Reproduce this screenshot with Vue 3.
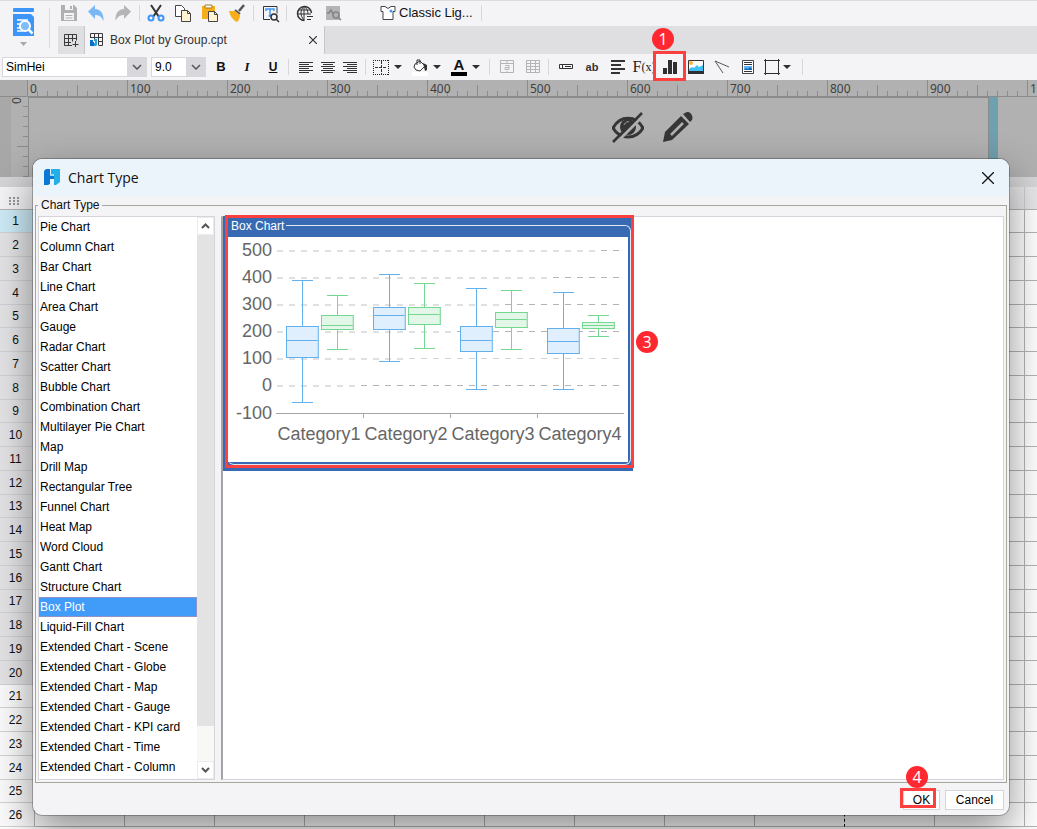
<script setup>
import { ref } from 'vue'

const chartTypes = [
  'Pie Chart', 'Column Chart', 'Bar Chart', 'Line Chart', 'Area Chart', 'Gauge', 'Radar Chart',
  'Scatter Chart', 'Bubble Chart', 'Combination Chart', 'Multilayer Pie Chart', 'Map', 'Drill Map',
  'Rectangular Tree', 'Funnel Chart', 'Heat Map', 'Word Cloud', 'Gantt Chart', 'Structure Chart',
  'Box Plot', 'Liquid-Fill Chart', 'Extended Chart - Scene', 'Extended Chart - Globe',
  'Extended Chart - Map', 'Extended Chart - Gauge', 'Extended Chart - KPI card',
  'Extended Chart - Time', 'Extended Chart - Column',
]
const selected = ref('Box Plot')
const font = ref('SimHei')
const size = ref('9.0')

const rows = Array.from({ length: 26 }, (_, i) => i + 1)
const rulerMarks = Array.from({ length: 11 }, (_, i) => i * 100)
const minorTicks = [10, 20, 30, 40, 60, 70, 80, 90]

// Value axis: y position, and the x where the thick dashes turn into thin ones
const gridLines = [
  { label: '500', y: 14, split: 372, thin: '#b4b4b4' },
  { label: '400', y: 41, split: 324, thin: '#b4b4b4' },
  { label: '300', y: 68, split: 276, thin: '#b4b4b4' },
  { label: '200', y: 95, split: 228, thin: '#b4b4b4' },
  { label: '100', y: 122, split: 180, thin: '#d4d4d4' },
  { label: '0', y: 149, split: 132, thin: '#b4b4b4' },
]
const blue = { line: '#62b1ec', fill: '#dfeffd', soft: '#a4d2f5' }
const green = { line: '#74d890', fill: '#e3f7e8', soft: '#a9e5b9' }
const boxes = [
  { c: blue, x: 58, top: 89, bottom: 120, median: 103, hi: 43, lo: 165 },
  { c: green, x: 93, top: 78, bottom: 92, median: 88, hi: 58, lo: 112 },
  { c: blue, x: 145, top: 70, bottom: 92, median: 78, hi: 37, lo: 124 },
  { c: green, x: 180, top: 70, bottom: 87, median: 77, hi: 46, lo: 111 },
  { c: blue, x: 232, top: 89, bottom: 114, median: 103, hi: 51, lo: 152 },
  { c: green, x: 267, top: 75, bottom: 90, median: 82, hi: 53, lo: 112 },
  { c: blue, x: 319, top: 91, bottom: 116, median: 104, hi: 55, lo: 152 },
  { c: green, x: 354, top: 85, bottom: 91, median: 88, hi: 78, lo: 99 },
]
const categories = ['Category1', 'Category2', 'Category3', 'Category4']
</script>

<template>
  <div class="page">
    <header class="top">
      <button class="brand" aria-label="Preview">
        <svg width="24" height="40" viewBox="0 0 24 40">
          <rect x="2" y="0" width="21" height="4" rx="1" fill="#3d96f7" />
          <path d="M2 6h18l3 3v19H2z" fill="#3d96f7" />
          <path d="M6 12h11M6 16h4M6 20h4M6 23h6" stroke="#fff" stroke-width="1.500" />
          <circle cx="14" cy="18" r="5" fill="#7fbcfa" stroke="#fff" stroke-width="2" />
          <path d="m17.500 21.500 4 4" stroke="#fff" stroke-width="2.500" />
          <path d="M9 34h7l-3.500 4z" fill="#a8a8aa" />
        </svg>
      </button>
      <div class="top-main">
        <div class="bar main-bar">
          <button class="ic" aria-label="Save"><svg viewBox="0 0 22 22" width="22" height="22"><path d="M3 3h13l3 3v13H3z" fill="#b0b0b2" /><path d="M7 3h8v5H7z" fill="#f4f4f6" /><path d="M12 4h2v3h-2z" fill="#b0b0b2" /><path d="M6 11h10v7H6z" fill="#f4f4f6" /><path d="M7.500 13.500h7M7.500 16h7" stroke="#b0b0b2" /></svg></button>
          <button class="ic" aria-label="Undo"><svg viewBox="0 0 22 22" width="22" height="22"><path d="M3 9.500 10 3v4c6 0 9 5 8.500 12-2-4-4-6-8.500-6v4z" fill="#7ab8f5" /></svg></button>
          <button class="ic" aria-label="Redo"><svg viewBox="0 0 22 22" width="22" height="22"><path d="M19 9.500 12 3v4c-6 0-9 5-8.500 12 2-4 4-6 8.500-6v4z" fill="#b5b5b7" /></svg></button>
          <i class="sep"></i>
          <button class="ic" aria-label="Cut"><svg viewBox="0 0 22 22" width="22" height="22" fill="none"><path d="m6 3 8 12M16 3 8 15" stroke="#333" stroke-width="2" /><circle cx="6" cy="16" r="2.500" stroke="#3d96f7" stroke-width="2" /><circle cx="16" cy="16" r="2.500" stroke="#3d96f7" stroke-width="2" /></svg></button>
          <button class="ic" aria-label="Copy"><svg viewBox="0 0 22 22" width="22" height="22" stroke="#444"><path d="M3.500 3.500h6l3 3v8h-9z" fill="#fff" /><path d="M9.500 8.500h6l3 3v8h-9z" fill="#fff3d2" /><path d="M15.500 8.500v3h3" fill="none" /></svg></button>
          <button class="ic" aria-label="Paste"><svg viewBox="0 0 22 22" width="22" height="22"><path d="M3 4h13v13H3z" fill="#f6ae1c" /><path d="M6 3h7v3H6z" fill="#fff" stroke="#a77a20" /><path d="M9.500 9.500h6l3 3v7h-9z" fill="#fff3d2" stroke="#444" /><path d="M15.500 9.500v3h3" fill="none" stroke="#444" /></svg></button>
          <button class="ic" aria-label="Format painter"><svg viewBox="0 0 22 22" width="22" height="22"><path d="m18 3-5 6" stroke="#555" stroke-width="2.500" /><path d="m9 8 5 4" stroke="#555" stroke-width="2" /><path d="M3 9h6l5 4c0 3-1 5-3 7-4-2-7-6-8-11z" fill="#f6ae1c" /></svg></button>
          <i class="sep"></i>
          <button class="ic" aria-label="Find and replace"><svg viewBox="0 0 22 22" width="22" height="22" fill="none"><path d="M11 17.500H4.500v-13h13.500v7" stroke="#333" /><path d="M7 9V7h8v2M11 7v7M9.500 14h3" stroke="#3d96f7" stroke-width="1.500" /><circle cx="15" cy="15" r="3" stroke="#333" stroke-width="1.500" /><path d="m17 17 3 3" stroke="#333" stroke-width="1.500" /></svg></button>
          <i class="sep"></i>
          <button class="ic globe" aria-label="Language"><svg viewBox="0 0 22 22" width="22" height="22" fill="none" stroke="#333"><path d="M18.500 11a7 7 0 1 0-7 7.500" stroke-width="1.500" /><path d="M11 4c-4 4-4 10 0 14M11 4c3 3 4 5 4 8M5 8h12M4 12h14M11 4v14M14 14.500h6M14 17.500h4" /></svg></button>
          <button class="ic" aria-label="Inspect"><svg viewBox="0 0 22 22" width="22" height="22" fill="none"><path d="M4 4h14v14H4z" fill="#b4b4b6" /><path d="M5 11h2l2-3 2 4 1-2" stroke="#858587" stroke-width="1.500" /><circle cx="14" cy="13" r="3" stroke="#858587" stroke-width="1.500" /><path d="m16 15 3 3" stroke="#858587" stroke-width="1.500" /></svg></button>
          <button class="theme"><svg width="18" height="16" viewBox="0 0 18 16"><path d="M2 1.500h4l3 2 3-2h4v5h-2v8H4v-8H2z" fill="#fff" stroke="#444" /><circle cx="12" cy="6" r="1.500" fill="#3d96f7" /></svg>Classic Lig...</button>
          <i class="sep theme-sep"></i>
        </div>
        <nav class="tabs">
          <button class="add-tab" aria-label="New template"><svg width="16" height="16" viewBox="0 0 16 16" fill="none" stroke="#3a3a3c"><path d="M9 13.500H1.500v-11h12v6M1.500 6.500h12M1.500 10.500H8M5.500 2.500v11M9.500 2.500v7M12.500 9v6M9.500 12.500h6" /></svg></button>
          <div class="tab">
            <svg width="16" height="16" viewBox="0 0 16 16"><path d="M1.500 6V1.500h12v12H10M1.500 5.500h12M9 9.500h5M5.500 1.500V7M9.500 1.500v12" fill="none" stroke="#3a3a3c" /><path d="M1 8h3v2h1v4H1z" fill="#0a6fc8" /><path d="M5 7h3v6l-1 1H5v-3h1V9H5z" fill="#28a5e0" /></svg>
            <span>Box Plot by Group.cpt</span>
            <button class="close-tab" aria-label="Close tab"><svg width="8" height="8" viewBox="0 0 8 8"><path d="m0 0 8 8M8 0 0 8" stroke="#333" stroke-width="1.200" /></svg></button>
          </div>
        </nav>
      </div>
    </header>

    <div class="bar format">
      <label class="pick font"><select v-model="font" aria-label="Font"><option>SimHei</option></select><span><svg width="10" height="6" viewBox="0 0 10 6"><path d="m1 1 4 4 4-4" fill="none" stroke="#555" stroke-width="1.500" /></svg></span></label>
      <label class="pick size"><select v-model="size" aria-label="Font size"><option>9.0</option></select><span><svg width="10" height="6" viewBox="0 0 10 6"><path d="m1 1 4 4 4-4" fill="none" stroke="#555" stroke-width="1.500" /></svg></span></label>
      <button class="ic bold">B</button>
      <button class="ic italic">I</button>
      <button class="ic under">U</button>
      <i class="sep"></i>
      <div class="aligns">
        <button class="ic" aria-label="Align left"><svg width="22" height="22" viewBox="0 0 22 22"><path d="M4 6.500h14M4 8.500h10M4 10.500h14M4 12.500h10M4 14.500h14M4 16.500h10" stroke="#333" /></svg></button>
        <button class="ic" aria-label="Align center"><svg width="22" height="22" viewBox="0 0 22 22"><path d="M4 6.500h14M6 8.500h10M4 10.500h14M6 12.500h10M4 14.500h14M6 16.500h10" stroke="#333" /></svg></button>
        <button class="ic" aria-label="Align right"><svg width="22" height="22" viewBox="0 0 22 22"><path d="M4 6.500h14M8 8.500h10M4 10.500h14M8 12.500h10M4 14.500h14M8 16.500h10" stroke="#333" /></svg></button>
      </div>
      <i class="sep"></i>
      <button class="drop" aria-label="Borders"><svg width="18" height="18" viewBox="0 0 18 18"><path d="M1 2.500h16M1 16.500h16M1.500 2v15M16.500 2v15" fill="none" stroke="#222" stroke-dasharray="1 1" /><path d="M3 9.500h12M9.500 3v13" stroke="#333" stroke-dasharray="3 1" /></svg><b class="caret"></b></button>
      <button class="drop" aria-label="Fill color"><svg width="18" height="18" viewBox="0 0 18 18"><path d="M1 14h16v4H1z" fill="#fff" /><path d="m4 6 5-3 5 5-5 5-4-1-2-3zM6 7V2h3v4" fill="#fff" stroke="#333" /><path d="m12 5 4 2v5l-2 1-1-4z" fill="#333" /></svg><b class="caret"></b></button>
      <button class="drop letter" aria-label="Font color"><span class="color-a">A</span><b class="caret"></b></button>
      <i class="sep"></i>
      <button class="ic" aria-label="Merge cells"><svg width="22" height="22" viewBox="0 0 22 22" fill="none" stroke="#b4b4b6"><path d="M4.500 4.500h13v12h-13zM4 7.500h14M11 4v3M11 15v2" /><path d="M9 9.500h4v4H9v-2h4" /></svg></button>
      <button class="ic" aria-label="Unmerge cells"><svg width="22" height="22" viewBox="0 0 22 22" fill="none" stroke="#b4b4b6"><path d="M4.500 4.500h13v12h-13zM4 7.500h14M4 10.500h14M4 13.500h14M8.500 4v13M13.500 4v13" /></svg></button>
      <i class="sep"></i>
      <button class="ic" aria-label="Widget"><svg width="22" height="22" viewBox="0 0 22 22" fill="none" stroke="#333"><path d="M4.500 8.500h13v4h-13zM7.500 8v4M10 10.500h6" /></svg></button>
      <button class="ic ab">ab</button>
      <button class="ic" aria-label="Rich text"><svg width="22" height="22" viewBox="0 0 22 22"><path d="M4 5h14M4 9h10M4 13h14M4 17h9" stroke="#333" stroke-width="2" /></svg></button>
      <button class="ic fx">F<small>(x)</small></button>
      <button class="ic marked" aria-label="Insert chart"><svg width="22" height="22" viewBox="0 0 22 22"><path d="M4 12h4v6H4zM9 4h4v14H9zM14 6h4v12h-4z" fill="#2f2f31" /></svg><span class="frame"></span><span class="badge">1</span></button>
      <button class="ic" aria-label="Insert image"><svg width="22" height="22" viewBox="0 0 22 22"><path d="M3.500 4.500h15v12h-15z" fill="#fff" stroke="#333" /><path d="M4 13l3-2 2 1 3-3 2 2 4-2v7H4z" fill="#40c0f5" /><path d="M3 15h16v3H3z" fill="#2f2f31" /><circle cx="6" cy="7" r="2" fill="#fbb33c" /></svg></button>
      <button class="ic" aria-label="Slope line"><svg width="22" height="22" viewBox="0 0 22 22"><path d="m4 5 14 6M4 5l8 12" stroke="#555" /></svg></button>
      <button class="ic" aria-label="Sub-report"><svg width="22" height="22" viewBox="0 0 22 22"><path d="M5.500 4.500h11v13h-11z" fill="#fff" stroke="#444" /><path d="M7 6.500h8M7 8.500h8M7 15.500h8" stroke="#333" /><path d="M7 10h8v4H7z" fill="#58b4f5" /><path d="m7 14 2-2 2 1 2-2 2 2v1z" fill="#1668b0" /></svg></button>
      <button class="drop" aria-label="Frame"><svg width="18" height="18" viewBox="0 0 18 18"><path d="M2.500 1v16M15.500 1v16M1 2.500h16M1 15.500h16" stroke="#2f2f31" /></svg><b class="caret tight"></b></button>
      <i class="sep"></i>
    </div>

    <div class="ruler">
      <div class="corner"></div>
      <div class="ruler-track">
        <div v-for="m in rulerMarks" :key="m" class="segment">
          <span>{{ m }}</span>
          <svg width="100" height="16" viewBox="0 0 100 16"><path d="M.500 0v16M50.500 5v11" stroke="#8b8b8b" /><path v-for="t in minorTicks" :key="t" :d="`M${t + 0.5} 11v5`" stroke="#8b8b8b" /></svg>
        </div>
      </div>
    </div>
    <div class="canvas">
      <div class="v-ruler">
        <span>0</span>
        <svg width="17" height="80" viewBox="0 0 17 80"><path d="M12 9.500h5M12 19.500h5M12 29.500h5M12 39.500h5M6 49.500h11M12 59.500h5M12 69.500h5M12 79.500h5" stroke="#8b8b8b" /></svg>
      </div>
      <div class="paper">
        <svg width="32" height="32" viewBox="0 0 32 32"><path d="M1 17C8 4 24 4 31 17 24 29 8 29 1 17z" fill="none" stroke="#363636" stroke-width="3" /><circle cx="16" cy="16" r="8" fill="#363636" /><path d="M12 14c1-2 3-4 5-3" stroke="#b0b0b0" fill="none" /><path d="M4 32 33 3" stroke="#b0b0b0" stroke-width="3" /><path d="M1 31 30 2" stroke="#363636" stroke-width="2.500" /></svg>
        <svg width="32" height="32" viewBox="0 0 32 32"><path d="M1 31 3 21 19 5l8 8-17 16z" fill="#363636" /><path d="m9 24 12-12" stroke="#b0b0b0" stroke-width="2.500" /><path d="m21 3 2-1c4-3 9 2 7 7l-2 2z" fill="#363636" /></svg>
      </div>
      <div class="handle"></div>
    </div>
    <div class="strip"></div>
    <table class="sheet">
      <thead><tr><th class="grip"><svg width="10" height="8" viewBox="0 0 10 8"><path d="M0 1h10M0 4h10M0 7h10" stroke="#999" stroke-width="2" stroke-dasharray="2 2" /></svg></th><th v-for="c in 16" :key="c"></th></tr></thead>
      <tbody>
        <tr v-for="r in rows" :key="r" :class="{ current: r === 1, inside: r > 1 && r < 21 }">
          <th>{{ r }}</th><td v-for="c in 16" :key="c" :class="{ edge: c === 9 }"></td>
        </tr>
      </tbody>
    </table>

    <section class="dialog" role="dialog" aria-label="Chart Type">
      <div class="title">
        <svg width="16" height="17" viewBox="0 0 16 17"><path d="M0 2 2 0h4v6h4v4H6v5l-2 1H0z" fill="#0a78d4" /><path d="M7 0h9v13l-4 3h-2V6H7z" fill="#22b0ea" /><path d="M6 5h4v2H6z" fill="#9adbf6" /></svg>
        <h1>Chart Type</h1>
        <button aria-label="Close"><svg width="12" height="12" viewBox="0 0 12 12"><path d="m0 0 12 12M12 0 0 12" stroke="#111" stroke-width="1.300" /></svg></button>
      </div>
      <fieldset class="group">
        <legend>Chart Type</legend>
        <div class="cols">
          <div class="list">
            <ul role="listbox" aria-label="Chart Type">
              <li v-for="t in chartTypes" :key="t" role="option" :aria-selected="t === selected" :class="{ on: t === selected }" @click="selected = t">{{ t }}</li>
            </ul>
            <div class="scroll">
              <button aria-label="Scroll up"><svg width="9" height="6" viewBox="0 0 9 6"><path d="m1 5 3.500-3.500L8 5" fill="none" stroke="#555" stroke-width="2" /></svg></button>
              <div class="thumb"></div>
              <div class="track"></div>
              <button aria-label="Scroll down"><svg width="9" height="6" viewBox="0 0 9 6"><path d="m1 1 3.500 3.500L8 1" fill="none" stroke="#555" stroke-width="2" /></svg></button>
            </div>
          </div>
          <div class="panel">
            <div class="card">
              <div class="card-frame">
                <div class="card-title"><span>Box Chart</span></div>
                <svg class="plot" width="400" height="225" viewBox="0 0 400 225">
                  <g v-for="g in gridLines" :key="g.label">
                    <path :d="`M49 ${g.y}H${g.split}`" stroke="#e0e0e0" stroke-width="2" stroke-dasharray="6 6" />
                    <path :d="`M${g.split + 1} ${g.y - 0.5}H394`" :stroke="g.thin" stroke-dasharray="6 6" />
                    <text x="44" :y="g.y + 5" text-anchor="end">{{ g.label }}</text>
                  </g>
                  <text x="44" y="182" text-anchor="end">-100</text>
                  <path d="M48 176.500H396M135.500 177v4M222.500 177v4M309.500 177v4" stroke="#a6a6a6" fill="none" />
                  <g v-for="b in boxes" :key="b.x" fill="none">
                    <path :d="`M${b.x + 16.5} ${b.hi}V${b.top}M${b.x + 16.5} ${b.bottom}V${b.lo}M${b.x + 6} ${b.hi + 0.5}h21M${b.x + 6} ${b.lo + 0.5}h21`" :stroke="b.c.line" />
                    <rect :x="b.x + 0.5" :y="b.top + 0.5" width="32" :height="b.bottom - b.top" :fill="b.c.fill" :stroke="b.c.line" />
                    <path :d="`M${b.x + 1} ${b.median + 0.5}h31`" :stroke="b.c.line" />
                    <path :d="`M${b.x + 32} ${b.top + 1}V${b.bottom}`" :stroke="b.c.soft" />
                  </g>
                  <text v-for="(c, i) in categories" :key="c" :x="91 + i * 87" y="203" text-anchor="middle">{{ c }}</text>
                </svg>
              </div>
              <span class="frame"></span>
              <span class="badge">3</span>
            </div>
          </div>
        </div>
      </fieldset>
      <footer>
        <button class="ok">OK<span class="frame"></span><span class="badge">4</span></button>
        <button class="cancel">Cancel</button>
      </footer>
    </section>
  </div>
</template>

<style>
body { overflow: hidden; }
</style>

<style scoped>
* { box-sizing: border-box; }
.page { position: relative; height: 100vh; overflow: hidden; background: #fff; font: 12px/16px "Liberation Sans", Arial, sans-serif; color: #111; display: flex; flex-direction: column; }
.page > * { flex: none; }
button { border: 0; padding: 0; background: none; font: inherit; color: inherit; }
svg { display: block; flex: none; }
.top { display: flex; height: 54px; background: #f4f4f6; border-top: 1px solid #dcdcde; }
.brand { width: 50px; height: 40px; margin: 7px 8px 0 0; border-right: 1px solid #dcdcde; display: flex; justify-content: center; padding-right: 3px; }
.top-main { flex: 1; display: flex; flex-direction: column; min-width: 0; }
.bar { display: flex; align-items: center; }
.main-bar { height: 25px; gap: 5px; padding-bottom: 2px; }
.ic { position: relative; width: 22px; height: 22px; flex: none; display: flex; align-items: center; justify-content: center; }
.globe { margin: 0 2px 0 1px; }
.sep { width: 1px; height: 16px; background: #d8d8db; flex: none; }
.theme { display: flex; align-items: center; gap: 2px; margin-left: 30px; font-size: 13px; }
.theme-sep { margin-left: 3px; }
.tabs { display: flex; height: 28px; background: #dfdfe1; }
.add-tab { width: 27px; border-right: 1px solid #c8c8cc; display: flex; align-items: center; justify-content: center; }
.tab { width: 240px; border-right: 1px solid #c8c8cc; background: #f4f4f6; display: flex; align-items: center; padding: 0 7px 0 4px; gap: 5px; color: #333; }
.close-tab { margin-left: auto; }
.format { height: 26px; background: #f4f4f6; gap: 4px; padding-left: 2px; }
.pick { display: flex; height: 20px; border: 1px solid #d8d8dc; background: #fff; }
.pick select { appearance: none; border: 0; background: #fff; flex: 1; min-width: 0; padding: 0 3px; font: inherit; color: #000; }
.pick span { width: 19px; background: #d8d8dc; display: flex; align-items: center; justify-content: center; }
.font { width: 145px; }
.size { width: 55px; }
.bold { font-weight: 700; font-size: 13px; }
.italic { font: italic 700 13px "Liberation Serif", serif; }
.under { font-weight: 700; font-size: 12px; text-decoration: underline; }
.format .sep { margin: 0 2px 0 0; }
.aligns { display: flex; }
.drop { width: 35px; height: 22px; display: flex; align-items: center; gap: 4px; }
.caret { border: 4px solid transparent; border-top-color: #2f2f31; border-bottom: 0; }
.caret.tight { margin-left: -2px; }
.color-a { width: 16px; margin: 0 1px; font: 700 15px/14px "Liberation Sans", Arial, sans-serif; border-bottom: 4px solid #000; }
.ab { font-weight: 700; font-size: 11px; color: #333; }
.fx { font: 16px "Liberation Serif", serif; color: #222; }
.fx small { font-size: 12px; }
.frame { position: absolute; border: 3px solid #fc4040; pointer-events: none; }
.badge { position: absolute; width: 22px; height: 22px; border-radius: 50%; background: #ff2830; color: #fff; font: 16px/22px "Open Sans", sans-serif; text-align: center; z-index: 2; }
.marked .frame { inset: -5px -5px -3px -6px; z-index: 1; }
.marked .badge { left: -7px; top: -28px; }

.ruler { display: flex; height: 17px; background: #b1b1b1; }
.corner { width: 28px; border-right: 1px solid #777; border-bottom: 1px solid #8b8b8b; background: #ababab; }
.ruler-track { display: flex; flex: 1; overflow: hidden; border-bottom: 1px solid #8b8b8b; margin-left: -1px; }
.segment { width: 100px; flex: none; position: relative; }
.segment span { position: absolute; left: 3px; top: 1px; font: 12px/16px "Noto Sans", sans-serif; color: #404040; }
.canvas { display: flex; height: 80px; background: #b1b1b1; }
.v-ruler { width: 29px; padding-left: 11px; border-right: 1px solid #8b8b8b; position: relative; background: linear-gradient(90deg, #a8a8a8 11px, #b1b1b1 11px); }
.v-ruler span { position: absolute; left: 9px; top: 0; font: 12px/16px "Noto Sans", sans-serif; writing-mode: vertical-rl; transform: rotate(180deg); color: #404040; }
.paper { flex: 1; border-top: 1px solid #8b8b8b; border-right: 1px solid #8b8b8b; display: flex; justify-content: flex-end; gap: 18px; padding: 13px 294px 0 0; }
.handle { width: 9px; background: #6fa0ad; margin-right: 39px; }
.strip { height: 10px; background: #d5d5d7; }
.sheet { border-collapse: separate; border-spacing: 0; table-layout: fixed; width: 1475px; }
.sheet th, .sheet td { width: 90px; height: 24px; padding: 0; border-right: 1px solid #b4b4b6; border-bottom: 1px solid #b4b4b6; font-weight: 400; }
.sheet tbody tr:nth-child(4n + 1) > * { height: 23px; }
.sheet thead th { height: 23px; background: #e6e6e8; border-right-color: #ccccce; }
.sheet tbody th:first-child { border-bottom-color: #d0d0d6; }
.sheet th:first-child { width: 35px; padding-right: 3px; text-align: center; background: #fbfbfc; }
.sheet thead .grip { background: #f4f4f6; padding-right: 6px; }
.grip svg { margin: 6px auto 0; }
.sheet .inside th:first-child { background: #e4e4e6; }
.sheet .current th:first-child { background: #cdebf7; }
.sheet .edge { border-right: 1px dashed #000; }

.dialog { position: absolute; left: 33px; right: 28px; top: 159px; background: #f4f4f6; border-radius: 9px; box-shadow: 0 0 0 1px rgba(0, 0, 0, .25), 0 16px 40px rgba(0, 0, 0, .45); display: flex; flex-direction: column; }
.title { height: 37px; background: #ebf4fb; border-radius: 9px 9px 0 0; display: flex; align-items: center; padding: 0 15px 0 11px; gap: 8px; }
.title h1 { margin: 0; font: 400 14px/18px "Open Sans", sans-serif; flex: 1; }
.group { margin: 1px 2px 0; border: 1px solid #a6a69c; padding: 3px 2px 2px; min-width: 0; }
legend { padding: 0 3px; margin-left: 0; }
.cols { display: flex; gap: 6px; }
.list { width: 177px; background: #fff; border: 1px solid #d4d4da; display: flex; }
ul { flex: 1; margin: 0; padding: 0 0 2px; list-style: none; }
li { height: 20px; line-height: 18px; padding-left: 1px; white-space: nowrap; color: #000; border: 1px solid transparent; border-left: 0; }
li.on { background: #419bf9; color: #fff; border-color: #8f93c8; }
.scroll { width: 17px; display: flex; flex-direction: column; }
.scroll button { height: 18px; display: flex; align-items: center; justify-content: center; border: 1px solid #ececee; }
.thumb { flex: 14; background: #e3e3e3; }
.track { flex: 1; background: #f8f8f5; }
.panel { flex: 1; background: #fff; border: 1px solid #d4d4da; border-left: 2px solid #a4a4a8; }
.card { position: relative; width: 410px; margin-top: -1px; background: #386ab4; padding: 3px 2px 6px 5px; color: #fff; }
.card-frame { position: relative; border-radius: 6px; padding: 1px 3px 1px 0; }
.card-frame::before { content: ""; position: absolute; inset: 6px 0 0; border: 1px solid #dfe7f3; border-left: 0; border-radius: 6px; }
.card-title { height: 17px; line-height: 12px; position: relative; }
.card-title span { display: inline-block; background: #386ab4; padding: 0 2px 0 3px; }
.plot { width: 100%; height: auto; position: relative; margin-bottom: 2px; background: #fff; }
.plot text { font-size: 18px; fill: #666; }
.card .frame { inset: -1px -1px 3px 2px; }
.card .badge { right: -25px; top: 115px; }
footer { display: flex; justify-content: flex-end; gap: 5px; padding: 7px 5px 5px; }
footer button { position: relative; height: 20px; border: 1px solid #d6d6da; background: #fff; color: #000; }
.ok { width: 37px; }
.cancel { width: 59px; }
.ok .frame { inset: -3px 3px 1px -4px; }
.ok .badge { left: 2px; top: -25px; }
</style>
